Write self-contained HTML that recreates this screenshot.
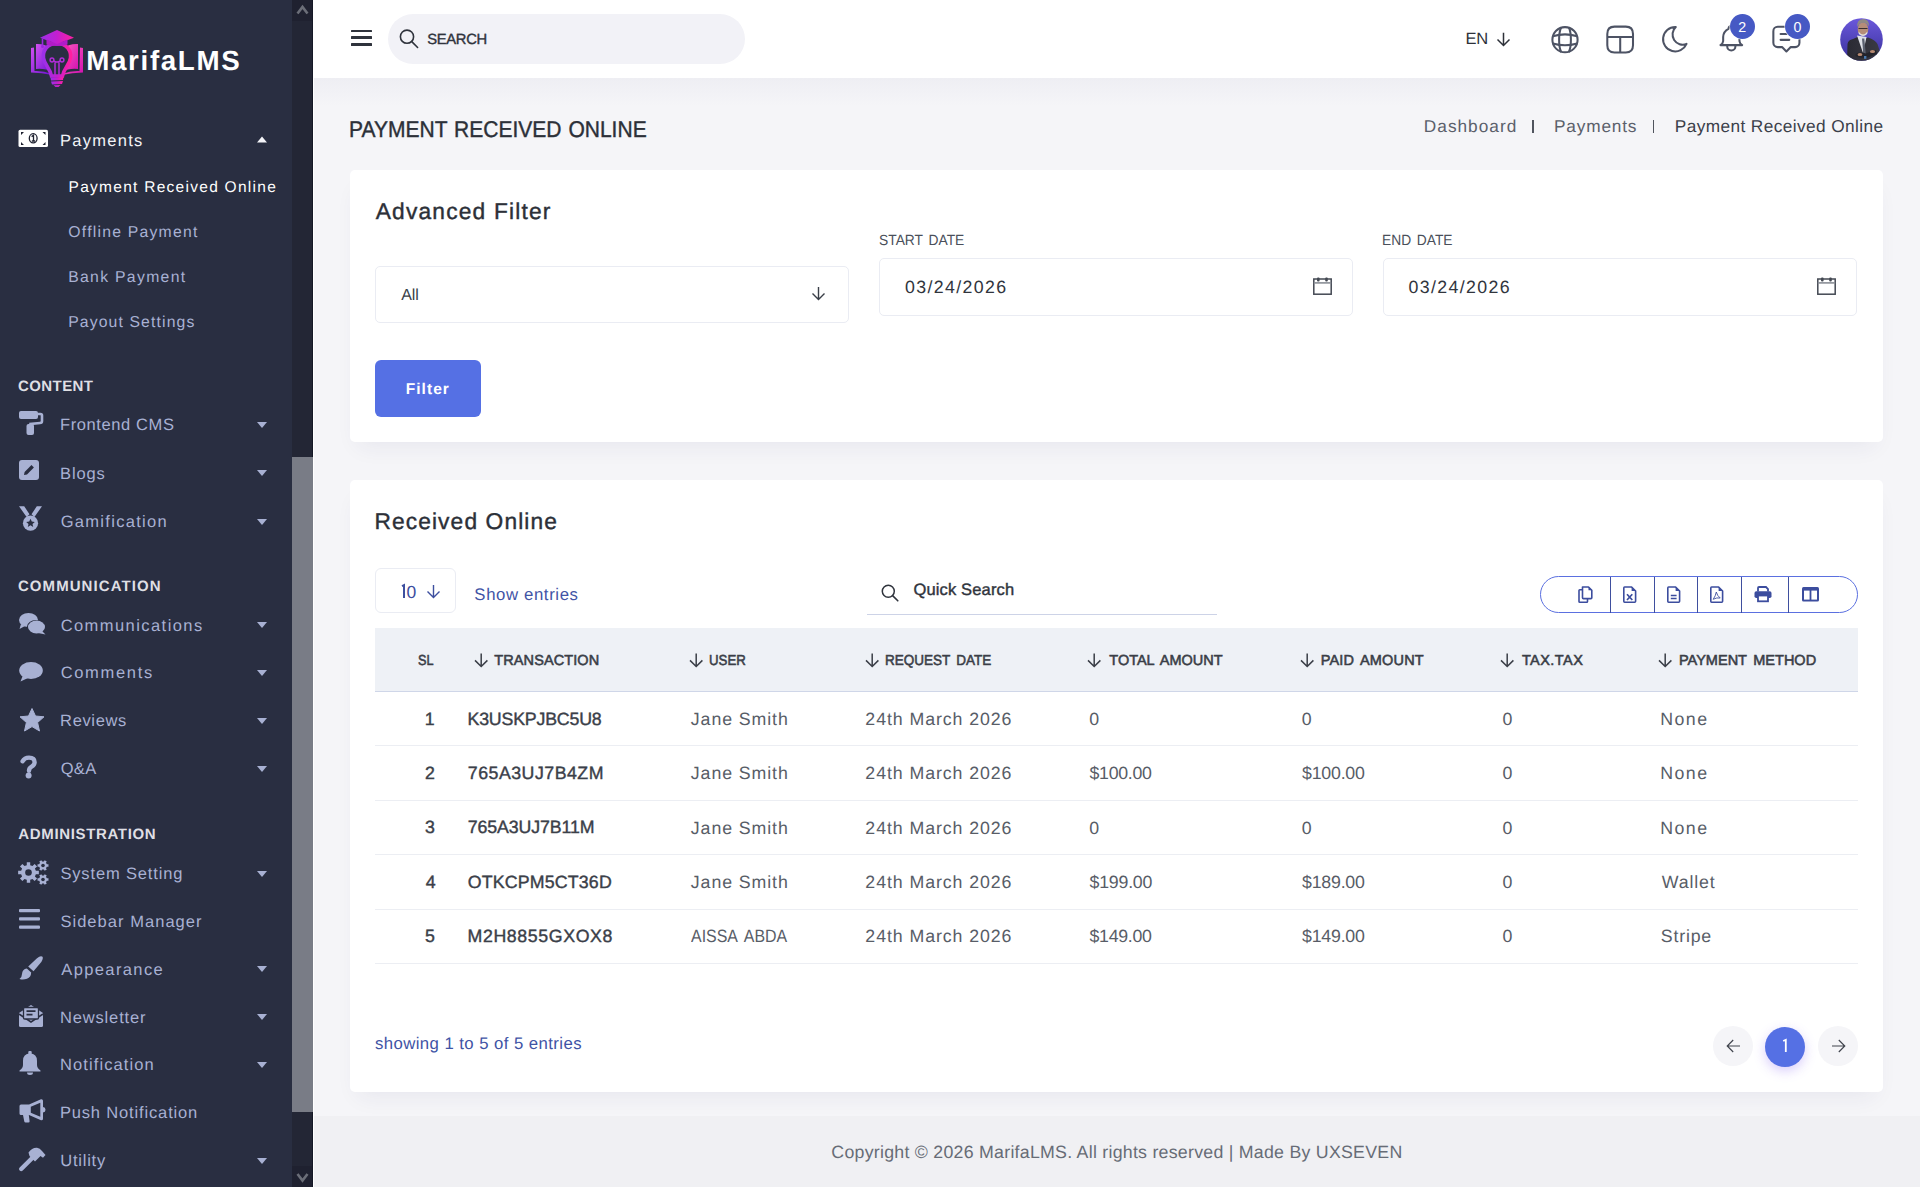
<!DOCTYPE html>
<html><head><meta charset="utf-8"><title>Payment Received Online</title>
<style>
html,body{margin:0;padding:0;width:1920px;height:1187px;overflow:hidden;background:#f5f5f8;font-family:"Liberation Sans",sans-serif}
.a{position:absolute}
.t{white-space:nowrap;text-rendering:geometricPrecision}
svg.a{overflow:visible}
</style></head><body>
<div class="a" style="left:313px;top:0px;width:1607px;height:1187px;background:#f5f5f8"></div>
<div class="a" style="left:313px;top:78px;width:1607px;height:28px;background:linear-gradient(#eeeef3,#f5f5f8)"></div>
<div class="a" style="left:1532.3px;top:119.5px;width:1.6000000000001364px;height:13.0px;background:#50545e"></div>
<div class="a" style="left:1652.8px;top:119.5px;width:1.6000000000001364px;height:13.0px;background:#50545e"></div>
<div class="a" style="left:313px;top:0px;width:1607px;height:78px;background:#fff"></div>
<div class="a" style="left:313px;top:1116px;width:1607px;height:71px;background:#f0f0f3"></div>
<div class="a" style="left:0px;top:0px;width:292px;height:1187px;background:#292e41"></div>
<div class="a" style="left:292px;top:0px;width:21px;height:1187px;background:#232635"></div>
<div class="a" style="left:312px;top:0px;width:1px;height:1187px;background:#151826"></div>
<div class="a" style="left:313px;top:0px;width:1px;height:1187px;background:#fff"></div>
<div class="a" style="left:292px;top:0px;width:20px;height:21px;background:#1f2130"></div>
<div class="a" style="left:292px;top:1166px;width:20px;height:21px;background:#1f2130"></div>
<div class="a" style="left:292px;top:457px;width:21px;height:655px;background:#797c86"></div>
<svg class="a" style="left:296px;top:4px;" width="13" height="11" viewBox="0 0 13 11"><path d="M1.5 9.5 L6.5 3 L11.5 9.5" fill="none" stroke="#6b6e78" stroke-width="2.6"/></svg>
<svg class="a" style="left:296px;top:1172px;" width="13" height="11" viewBox="0 0 13 11"><path d="M1.5 2 L6.5 8.5 L11.5 2" fill="none" stroke="#6b6e78" stroke-width="2.6"/></svg>
<div class="a" style="left:350px;top:170px;width:1533px;height:272px;background:#fff;border-radius:5px;box-shadow:0 12px 22px -8px rgba(40,40,100,0.07)"></div>
<div class="a" style="left:350px;top:480px;width:1533px;height:612px;background:#fff;border-radius:5px;box-shadow:0 12px 22px -8px rgba(40,40,100,0.07)"></div>
<div class="a" style="left:388px;top:13.5px;width:357px;height:50.25px;background:#f2f2f7;border-radius:25px"></div>
<div class="a" style="left:375px;top:266px;width:474px;height:57px;border:1px solid #eaecf3;border-radius:5px;box-sizing:border-box;background:#fff"></div>
<div class="a" style="left:879px;top:258px;width:474px;height:58px;border:1px solid #eaecf3;border-radius:5px;box-sizing:border-box;background:#fff"></div>
<div class="a" style="left:1383px;top:258px;width:474px;height:58px;border:1px solid #eaecf3;border-radius:5px;box-sizing:border-box;background:#fff"></div>
<div class="a" style="left:375px;top:360px;width:106px;height:57px;background:#5570e4;border-radius:6px"></div>
<div class="a" style="left:375px;top:568.4px;width:80.5px;height:44.39999999999998px;border:1px solid #eaecf3;border-radius:6px;box-sizing:border-box"></div>
<div class="a" style="left:867px;top:613.5px;width:350px;height:1.2000000000000455px;background:#cdd3e7"></div>
<div class="a" style="left:1540px;top:576px;width:318px;height:37px;border:1px solid #5b70e0;border-radius:19px;box-sizing:border-box"></div>
<div class="a" style="left:1610px;top:576.5px;width:1.2999999999999545px;height:36.0px;background:#3f4f9e"></div>
<div class="a" style="left:1654px;top:576.5px;width:1.2999999999999545px;height:36.0px;background:#3f4f9e"></div>
<div class="a" style="left:1697px;top:576.5px;width:1.2999999999999545px;height:36.0px;background:#3f4f9e"></div>
<div class="a" style="left:1741px;top:576.5px;width:1.2999999999999545px;height:36.0px;background:#3f4f9e"></div>
<div class="a" style="left:1788px;top:576.5px;width:1.2999999999999545px;height:36.0px;background:#3f4f9e"></div>
<div class="a" style="left:375px;top:628px;width:1483px;height:63px;background:#eef1f6"></div>
<div class="a" style="left:375px;top:690.5px;width:1483px;height:1.2000000000000455px;background:#cfd6e8"></div>
<div class="a" style="left:375px;top:745px;width:1483px;height:1px;background:#eceef3"></div>
<div class="a" style="left:375px;top:799.5px;width:1483px;height:1.0px;background:#eceef3"></div>
<div class="a" style="left:375px;top:854px;width:1483px;height:1px;background:#eceef3"></div>
<div class="a" style="left:375px;top:908.5px;width:1483px;height:1.0px;background:#eceef3"></div>
<div class="a" style="left:375px;top:962.5px;width:1483px;height:1.0px;background:#eceef3"></div>
<div class="a" style="left:1713px;top:1026px;width:40px;height:40px;background:#f5f5f8;border-radius:50%"></div>
<div class="a" style="left:1818px;top:1026px;width:40px;height:40px;background:#f5f5f8;border-radius:50%"></div>
<div class="a" style="left:1765px;top:1027px;width:40px;height:40px;background:#5570e4;border-radius:50%;box-shadow:0 4px 12px rgba(120,80,240,0.28)"></div>
<svg class="a" style="left:25px;top:25px" width="65" height="65" viewBox="0 0 65 65">
<defs><linearGradient id="lg1" x1="0" y1="0" x2="1" y2="0"><stop offset="0" stop-color="#9b30e8"/><stop offset="0.5" stop-color="#c21fd0"/><stop offset="1" stop-color="#ff1fa0"/></linearGradient>
<linearGradient id="lg2" x1="0" y1="0" x2="1" y2="1"><stop offset="0" stop-color="#d050f0"/><stop offset="1" stop-color="#6a10d0"/></linearGradient>
<linearGradient id="lg3" x1="0" y1="0" x2="1" y2="1"><stop offset="0" stop-color="#ff60c0"/><stop offset="1" stop-color="#d010b0"/></linearGradient></defs>
<path d="M6 23 L9 22.5 L9.5 46 Q18 45.5 27 49 L27 50 Q17 47.5 6 47.5 Z" fill="url(#lg2)"/>
<path d="M58 23 L55 22.5 L54.5 46 Q46 45.5 37 49 L37 50 Q47 47.5 58 47.5 Z" fill="url(#lg3)"/>
<path d="M11 19 Q20 18.5 27 24 L27 47 Q20 43 11 44 Z" fill="url(#lg2)"/>
<path d="M53 19 Q44 18.5 37 24 L37 47 Q44 43 53 44 Z" fill="url(#lg3)"/>
<path d="M32 18.5 C22 18.5 17.5 26 18.5 33 C19.5 40 25 43 26.5 51 L37.5 51 C39 43 44.5 40 45.5 33 C46.5 26 42 18.5 32 18.5 Z" fill="#292e41" stroke="url(#lg1)" stroke-width="3.6"/>
<g fill="none" stroke="#b02cd8" stroke-width="1.5"><circle cx="27" cy="35" r="1.9"/><circle cx="37" cy="35" r="1.9"/><path d="M28.8 36 Q32 38 35.2 36 M30 37.5 L30 50 M34 37.5 L34 50"/></g>
<path d="M25.5 52.5 L38.5 52 L38 55 L26 55.5 Z M26 56.5 L38 56 L37 59 L27 59.5 Z M28.5 60.2 L35.5 60 L33.5 62 L30.5 62 Z" fill="url(#lg1)"/>
<path d="M32 5 L49 12.8 L32 19 L15 12.8 Z" fill="url(#lg1)"/>
<path d="M21.5 14.5 L21.5 19.5 Q26 21 32 21 Q38 21 42.5 19.5 L42.5 14.5 L32 19 Z" fill="#b01cc8"/>
<path d="M17.5 13.5 L17.5 21" stroke="#9a28e0" stroke-width="1.6"/><circle cx="17.5" cy="21.5" r="1.5" fill="#9a28e0"/>
</svg>
<svg class="a" style="left:18px;top:129px" width="31" height="19" viewBox="0 0 31 19">
<rect x="0.5" y="0.8" width="29.5" height="17.2" rx="1.6" fill="#ffffff"/>
<ellipse cx="15.2" cy="9.3" rx="3.9" ry="4.6" fill="none" stroke="#1e2130" stroke-width="1.3"/>
<path d="M13.6 7.6 L15.5 6.3 L15.5 12 M13.8 12 L17.2 12" fill="none" stroke="#1e2130" stroke-width="1.3"/>
<path d="M3 3 L6 3 L3 6 Z M27.5 3 L24.5 3 L27.5 6 Z M3 16 L6 16 L3 13 Z M27.5 16 L24.5 16 L27.5 13 Z" fill="#1e2130"/>
</svg>
<svg class="a" style="left:256.5px;top:136px;" width="10" height="6.5" viewBox="0 0 10 6.5"><path d="M0 6.5 L5 0.5 L10 6.5 Z" fill="#f3f4f8"/></svg>
<svg class="a" style="left:256.5px;top:422.1px;" width="10" height="6" viewBox="0 0 10 6"><path d="M0 0 L10 0 L5 6 Z" fill="#a8b1d3"/></svg>
<svg class="a" style="left:256.5px;top:470.40000000000003px;" width="10" height="6" viewBox="0 0 10 6"><path d="M0 0 L10 0 L5 6 Z" fill="#a8b1d3"/></svg>
<svg class="a" style="left:256.5px;top:518.5px;" width="10" height="6" viewBox="0 0 10 6"><path d="M0 0 L10 0 L5 6 Z" fill="#a8b1d3"/></svg>
<svg class="a" style="left:256.5px;top:622.1999999999999px;" width="10" height="6" viewBox="0 0 10 6"><path d="M0 0 L10 0 L5 6 Z" fill="#a8b1d3"/></svg>
<svg class="a" style="left:256.5px;top:670.0px;" width="10" height="6" viewBox="0 0 10 6"><path d="M0 0 L10 0 L5 6 Z" fill="#a8b1d3"/></svg>
<svg class="a" style="left:256.5px;top:718.0999999999999px;" width="10" height="6" viewBox="0 0 10 6"><path d="M0 0 L10 0 L5 6 Z" fill="#a8b1d3"/></svg>
<svg class="a" style="left:256.5px;top:765.9px;" width="10" height="6" viewBox="0 0 10 6"><path d="M0 0 L10 0 L5 6 Z" fill="#a8b1d3"/></svg>
<svg class="a" style="left:256.5px;top:870.6999999999999px;" width="10" height="6" viewBox="0 0 10 6"><path d="M0 0 L10 0 L5 6 Z" fill="#a8b1d3"/></svg>
<svg class="a" style="left:256.5px;top:966.1999999999999px;" width="10" height="6" viewBox="0 0 10 6"><path d="M0 0 L10 0 L5 6 Z" fill="#a8b1d3"/></svg>
<svg class="a" style="left:256.5px;top:1014.1999999999999px;" width="10" height="6" viewBox="0 0 10 6"><path d="M0 0 L10 0 L5 6 Z" fill="#a8b1d3"/></svg>
<svg class="a" style="left:256.5px;top:1061.8px;" width="10" height="6" viewBox="0 0 10 6"><path d="M0 0 L10 0 L5 6 Z" fill="#a8b1d3"/></svg>
<svg class="a" style="left:256.5px;top:1157.6px;" width="10" height="6" viewBox="0 0 10 6"><path d="M0 0 L10 0 L5 6 Z" fill="#a8b1d3"/></svg>
<svg class="a" style="left:18.5px;top:410.5px;" width="24" height="24" viewBox="0 0 24 24"><rect x="0" y="0" width="19" height="8" rx="2" fill="#a8b1d3"/><path d="M19 3 L21.5 3 Q23 3 23 4.5 L23 10 Q23 12 21 12 L11.5 13 L11.5 15" fill="none" stroke="#a8b1d3" stroke-width="2.6"/><rect x="7.5" y="13" width="7.5" height="11" rx="2" fill="#a8b1d3"/></svg>
<svg class="a" style="left:18.5px;top:460px;" width="20" height="20" viewBox="0 0 20 20"><rect x="0" y="0" width="20" height="20" rx="3" fill="#a8b1d3"/><path d="M5 15 L5.6 12 L12.5 5.1 L14.9 7.5 L8 14.4 Z" fill="#292e41"/></svg>
<svg class="a" style="left:18.5px;top:505.5px;" width="23" height="25" viewBox="0 0 23 25"><path d="M0 0.3 L5.2 0.3 L10.5 8.2 L7.6 11 Z M23 0.3 L17.8 0.3 L12.5 8.2 L15.4 11 Z" fill="#a8b1d3"/><circle cx="11.5" cy="17.2" r="7.6" fill="#a8b1d3"/><path d="M11.5 12.8 L12.8 15.6 L15.8 15.9 L13.5 17.9 L14.2 20.9 L11.5 19.3 L8.8 20.9 L9.5 17.9 L7.2 15.9 L10.2 15.6 Z" fill="#292e41"/></svg>
<svg class="a" style="left:18.5px;top:612.5px;" width="27" height="22" viewBox="0 0 27 22"><ellipse cx="9.5" cy="7" rx="9.5" ry="7" fill="#a8b1d3"/><path d="M2 11 L0.5 16 L6 13 Z" fill="#a8b1d3"/><ellipse cx="17" cy="13.5" rx="9" ry="6.5" fill="#292e41"/><ellipse cx="17.5" cy="14" rx="8.5" ry="6.5" fill="#a8b1d3"/><path d="M23 18 L26.5 21.5 L19 20 Z" fill="#a8b1d3"/></svg>
<svg class="a" style="left:18.5px;top:661.5px;" width="24" height="20" viewBox="0 0 24 20"><ellipse cx="12" cy="8.5" rx="11.8" ry="8.5" fill="#a8b1d3"/><path d="M4 13 L1.5 19.5 L9 16 Z" fill="#a8b1d3"/></svg>
<svg class="a" style="left:18.5px;top:707.5px;" width="26" height="24" viewBox="0 0 26 24"><path d="M13 0.5 L16.5 8 L25 8.8 L18.6 14.5 L20.5 23 L13 18.6 L5.5 23 L7.4 14.5 L1 8.8 L9.5 8 Z" fill="#a8b1d3" stroke="#a8b1d3" stroke-width="1" stroke-linejoin="round"/></svg>
<svg class="a" style="left:19.5px;top:756px;" width="18" height="23" viewBox="0 0 18 23"><path d="M2.6 5.2 Q4.5 1.6 9 1.6 Q14.6 1.6 14.6 6.2 Q14.6 8.8 11.6 10.6 Q9 12 9 14.8" fill="none" stroke="#a8b1d3" stroke-width="4.4" stroke-linecap="round"/><circle cx="8.6" cy="19.6" r="3" fill="#a8b1d3"/></svg>
<svg class="a" style="left:18.5px;top:860px;" width="30" height="24" viewBox="0 0 30 24"><polygon points="19.86,10.78 19.86,14.22 16.86,14.21 15.91,16.50 18.04,18.60 15.60,21.04 13.50,18.91 11.21,19.86 11.22,22.86 7.78,22.86 7.79,19.86 5.50,18.91 3.40,21.04 0.96,18.60 3.09,16.50 2.14,14.21 -0.86,14.22 -0.86,10.78 2.14,10.79 3.09,8.50 0.96,6.40 3.40,3.96 5.50,6.09 7.79,5.14 7.78,2.14 11.22,2.14 11.21,5.14 13.50,6.09 15.60,3.96 18.04,6.40 15.91,8.50 16.86,10.79" fill="#a8b1d3"/><circle cx="9.5" cy="12.5" r="3.3" fill="#292e41"/><polygon points="29.47,4.28 29.47,6.72 27.85,6.71 26.97,8.23 27.79,9.62 25.67,10.84 24.88,9.43 23.12,9.43 22.33,10.84 20.21,9.62 21.03,8.23 20.15,6.71 18.53,6.72 18.53,4.28 20.15,4.29 21.03,2.77 20.21,1.38 22.33,0.16 23.12,1.57 24.88,1.57 25.67,0.16 27.79,1.38 26.97,2.77 27.85,4.29" fill="#a8b1d3"/><circle cx="24" cy="5.5" r="1.8" fill="#292e41"/><polygon points="29.47,18.28 29.47,20.72 27.85,20.71 26.97,22.23 27.79,23.62 25.67,24.84 24.88,23.43 23.12,23.43 22.33,24.84 20.21,23.62 21.03,22.23 20.15,20.71 18.53,20.72 18.53,18.28 20.15,18.29 21.03,16.77 20.21,15.38 22.33,14.16 23.12,15.57 24.88,15.57 25.67,14.16 27.79,15.38 26.97,16.77 27.85,18.29" fill="#a8b1d3"/><circle cx="24" cy="19.5" r="1.8" fill="#292e41"/></svg>
<svg class="a" style="left:18.5px;top:909px;" width="21" height="20" viewBox="0 0 21 20"><rect x="0" y="0" width="21" height="3.2" rx="1" fill="#a8b1d3"/><rect x="0" y="8.3" width="21" height="3.2" rx="1" fill="#a8b1d3"/><rect x="0" y="16.6" width="21" height="3.2" rx="1" fill="#a8b1d3"/></svg>
<svg class="a" style="left:18.5px;top:955.5px;" width="24" height="24" viewBox="0 0 24 24"><path d="M23.2 0.6 Q24.8 2 22.3 6 L14.5 15.2 L9.2 10.6 L18 2.3 Q21.5 -0.8 23.2 0.6 Z" fill="#a8b1d3"/><path d="M7.8 12.6 L12.2 16.6 Q12 21.3 8 22.8 Q4 24.2 0.5 23 Q3 21 3 18 Q3.4 13.2 7.8 12.6 Z" fill="#a8b1d3"/></svg>
<svg class="a" style="left:18.5px;top:1003.5px;" width="24" height="23" viewBox="0 0 24 23"><path d="M0 9 L12 1 L24 9 L24 21.5 Q24 23 22.5 23 L1.5 23 Q0 23 0 21.5 Z" fill="#a8b1d3"/><path d="M0 10 L12 18 L24 10" fill="none" stroke="#292e41" stroke-width="1.6"/><rect x="4.5" y="3.5" width="15" height="11.5" rx="1.2" fill="#a8b1d3" stroke="#292e41" stroke-width="1.3"/><path d="M7.5 7.2 L16.5 7.2 M7.5 10.6 L13.5 10.6" stroke="#292e41" stroke-width="1.7"/></svg>
<svg class="a" style="left:18.5px;top:1050.5px;" width="22" height="24" viewBox="0 0 22 24"><rect x="9.3" y="0" width="3.4" height="4" rx="1" fill="#a8b1d3"/><path d="M11 2.5 Q18 2.5 18 10 L18 14 Q18 17 21.5 19.5 L21.5 20.5 L0.5 20.5 L0.5 19.5 Q4 17 4 14 L4 10 Q4 2.5 11 2.5 Z" fill="#a8b1d3"/><path d="M8 21.5 Q8 24 11 24 Q14 24 14 21.5 Z" fill="#a8b1d3"/></svg>
<svg class="a" style="left:18.5px;top:1099px;" width="27" height="24" viewBox="0 0 27 24"><path d="M0.5 7 Q0.5 5.5 2 5.5 L10 5.5 L22 0.3 Q24 0 24 1.8 L24 19.7 Q24 21.5 22 21.2 L10 16 L2 16 Q0.5 16 0.5 14.5 Z" fill="#a8b1d3"/><path d="M24 8 Q26.5 8.3 26.5 10.75 Q26.5 13.2 24 13.5 Z" fill="#a8b1d3"/><path d="M4 16 L9.8 16 L10.6 22.3 Q10.7 23.6 9.4 23.6 L6.6 23.6 Q5.5 23.6 5.3 22.5 Z" fill="#a8b1d3"/><path d="M21.3 3.8 L21.3 17.8 L11.8 13.8 L11.8 7.8 Z" fill="#292e41"/></svg>
<svg class="a" style="left:18.5px;top:1147px;" width="27" height="24" viewBox="0 0 27 24"><path d="M2.2 22 L14 10.2" stroke="#a8b1d3" stroke-width="4.4" stroke-linecap="round"/><path d="M9.5 5.5 Q13 0.5 18 0.8 Q21 1 23 4 L26.5 8 L24 10.8 L21.5 9 L16 14.5 L10.5 9 Z" fill="#a8b1d3"/></svg>
<div class="a" style="left:351px;top:29.5px;width:21px;height:2.700000000000003px;background:#2f333c;border-radius:0.5px"></div>
<div class="a" style="left:351px;top:36.2px;width:21px;height:2.700000000000003px;background:#2f333c;border-radius:0.5px"></div>
<div class="a" style="left:351px;top:43.1px;width:21px;height:2.700000000000003px;background:#2f333c;border-radius:0.5px"></div>
<svg class="a" style="left:399px;top:29px;" width="20" height="20" viewBox="0 0 20 20"><circle cx="8" cy="7.7" r="6.6" fill="none" stroke="#30343d" stroke-width="1.6"/><path d="M12.8 12.6 L18.6 18.5" stroke="#30343d" stroke-width="1.6" stroke-linecap="round"/></svg>
<svg class="a" style="left:1496px;top:32px;" width="15" height="15" viewBox="0 0 15 15"><path d="M7.5 0.8 L7.5 13.5 M1.5 7.5 L7.5 13.5 L13.5 7.5" fill="none" stroke="#2d3139" stroke-width="1.5"/></svg>
<svg class="a" style="left:1550px;top:24.5px;" width="30" height="30" viewBox="0 0 30 30"><g fill="none" stroke="#4d5364" stroke-width="2.05"><circle cx="15" cy="14.7" r="12.6"/><path d="M11.2 2.2 C8.4 8 8.4 21.4 11.2 27.2 M18.8 2.2 C21.6 8 21.6 21.4 18.8 27.2"/><path d="M2.8 11.2 Q15 7.6 27.2 11.2 M2.8 18.4 Q15 22 27.2 18.4"/></g></svg>
<svg class="a" style="left:1605px;top:24.5px;" width="30" height="30" viewBox="0 0 30 30"><g fill="none" stroke="#4d5364" stroke-width="2.05"><path d="M2.3 9 Q2.3 1.6 9.5 1.6 L20.8 1.6 Q28 1.6 28 9 L28 20.2 Q28 27.4 20.8 27.4 L9.5 27.4 Q2.3 27.4 2.3 20.2 Z"/><path d="M2.3 12 L28 12 M15.2 12 L15.2 27.4"/></g></svg>
<svg class="a" style="left:1658.5px;top:22.5px" width="32.52" height="32.52" viewBox="0 0 24 24"><g fill="none" stroke="#4d5364" stroke-width="1.5" stroke-linecap="round" stroke-linejoin="round"><path d="M12 3c.132 0 .263 0 .393 0a7.5 7.5 0 0 0 7.92 12.446a9 9 0 1 1 -8.313 -12.454z"/></g></svg>
<svg class="a" style="left:1714.6px;top:22.45px" width="32.64" height="32.64" viewBox="0 0 24 24"><g fill="none" stroke="#4d5364" stroke-width="1.5" stroke-linecap="round" stroke-linejoin="round"><path d="M10 5a2 2 0 1 1 4 0a7 7 0 0 1 4 6v3a4 4 0 0 0 2 3h-16a4 4 0 0 0 2 -3v-3a7 7 0 0 1 4 -6"/><path d="M9 17v1a3 3 0 0 0 6 0v-1"/></g></svg>
<svg class="a" style="left:1768.6px;top:20.6px" width="34.80" height="34.80" viewBox="0 0 24 24"><g fill="none" stroke="#4d5364" stroke-width="1.42" stroke-linecap="round" stroke-linejoin="round"><path d="M8 9h8"/><path d="M8 13h6"/><path d="M9 18h-3a3 3 0 0 1 -3 -3v-8a3 3 0 0 1 3 -3h12a3 3 0 0 1 3 3v8a3 3 0 0 1 -3 3h-3l-3 3l-3 -3z"/></g></svg>
<svg class="a" style="left:1840px;top:17.5px" width="43" height="43" viewBox="0 0 43 43">
<defs><linearGradient id="av" x1="0" y1="0" x2="0" y2="1"><stop offset="0" stop-color="#6b58dc"/><stop offset="1" stop-color="#38309a"/></linearGradient>
<linearGradient id="suit" x1="0" y1="0" x2="1" y2="0"><stop offset="0" stop-color="#2a2a33"/><stop offset="1" stop-color="#3a3a44"/></linearGradient>
<clipPath id="avc"><circle cx="21.5" cy="21.5" r="21.3"/></clipPath></defs>
<g clip-path="url(#avc)"><rect width="43" height="43" fill="url(#av)"/>
<path d="M7 43 L7.5 26 Q8 22 13 21 L18.5 18.5 L23 21 L28 19.5 Q35 21.5 37.5 26 L40 34 L38 43 Z" fill="url(#suit)"/>
<path d="M17 17.5 L23 35 L26.5 19 Z" fill="#dfe1e8"/>
<path d="M22 20.5 L24.3 20.5 L25.8 36 L23.5 38 Z" fill="#5a5f6e"/>
<path d="M15.5 36 Q20 33.5 26 35.5 Q30 33 36 32 L37 36 Q30 39 25 40 Q19 40 15.5 38 Z" fill="#24242c"/>
<ellipse cx="32.5" cy="33.5" rx="2.6" ry="1.6" fill="#b88a72"/><ellipse cx="20" cy="36.5" rx="2.4" ry="1.5" fill="#b88a72"/>
<rect x="24" y="38" width="2.4" height="2.8" fill="#4a7ab0"/>
<ellipse cx="23" cy="11" rx="5.3" ry="6.8" fill="#b58d78"/>
<path d="M17.3 9 Q16.5 1.5 23 1 Q29.5 1 29 8.5 Q27 4.5 23 4.7 Q19 4.5 17.3 9 Z" fill="#8f8a85"/>
<path d="M18.5 13.5 Q23 19.5 27.5 13.5 L27.2 16 Q23 20 18.8 16 Z" fill="#e0e0e0"/>
<path d="M18.5 10.5 L27.5 10.5" stroke="#3a3030" stroke-width="1"/>
</g></svg>
<svg class="a" style="left:811px;top:286px;" width="15" height="15" viewBox="0 0 15 15"><path d="M7.5 1 L7.5 13.5 M1.5 7.5 L7.5 13.5 L13.5 7.5" fill="none" stroke="#3a3f48" stroke-width="1.4"/></svg>
<svg class="a" style="left:1313px;top:276.5px;" width="19" height="18" viewBox="0 0 19 18"><g fill="none" stroke="#434852" stroke-width="1.5"><rect x="0.8" y="2" width="17.4" height="15.2"/><path d="M0.8 5.9 L18.2 5.9" stroke-width="1.6" stroke="#8a8e96"/></g><rect x="4" y="0.5" width="2.6" height="4" rx="1" fill="#434852"/><rect x="12.2" y="0.5" width="2.6" height="4" rx="1" fill="#434852"/></svg>
<svg class="a" style="left:1817px;top:276.5px;" width="19" height="18" viewBox="0 0 19 18"><g fill="none" stroke="#434852" stroke-width="1.5"><rect x="0.8" y="2" width="17.4" height="15.2"/><path d="M0.8 5.9 L18.2 5.9" stroke-width="1.6" stroke="#8a8e96"/></g><rect x="4" y="0.5" width="2.6" height="4" rx="1" fill="#434852"/><rect x="12.2" y="0.5" width="2.6" height="4" rx="1" fill="#434852"/></svg>
<svg class="a" style="left:399.5px;top:584px;" width="8" height="16" viewBox="0 0 8 16"><path d="M2 2.2 L4 1.2 L4 14" fill="none" stroke="#3d4f9f" stroke-width="2" stroke-linejoin="miter"/></svg>
<svg class="a" style="left:425.5px;top:583.5px;" width="15" height="15" viewBox="0 0 15 15"><path d="M7.5 1 L7.5 13.5 M1.5 7.5 L7.5 13.5 L13.5 7.5" fill="none" stroke="#3d4f9f" stroke-width="1.4"/></svg>
<svg class="a" style="left:881px;top:584px;" width="18" height="18" viewBox="0 0 18 18"><circle cx="7.3" cy="7.3" r="6" fill="none" stroke="#30343d" stroke-width="1.5"/><path d="M11.6 11.6 L16.8 16.8" stroke="#30343d" stroke-width="1.6" stroke-linecap="round"/></svg>
<svg class="a" style="left:1578px;top:585.5px;" width="15" height="17" viewBox="0 0 15 17"><g fill="none" stroke="#3c4d9e" stroke-width="1.6" stroke-linejoin="round"><path d="M4.5 1 L10.5 1 L13.8 4.3 L13.8 11.7 Q13.8 12.6 12.9 12.6 L5.4 12.6 Q4.5 12.6 4.5 11.7 Z"/><path d="M4.5 3.7 L1.8 3.7 Q1 3.7 1 4.6 L1 15.4 Q1 16.2 1.8 16.2 L8.7 16.2 Q9.5 16.2 9.5 15.4 L9.5 12.6"/></g><path d="M10.5 1 L10.5 4.3 L13.8 4.3 Z" fill="#3c4d9e"/></svg>
<svg class="a" style="left:1622.5px;top:585.5px;" width="14" height="17" viewBox="0 0 14 17"><path d="M1.6 1 L8.6 1 L12.6 5 L12.6 15.3 Q12.6 16.2 11.7 16.2 L1.6 16.2 Q0.8 16.2 0.8 15.3 L0.8 1.9 Q0.8 1 1.6 1 Z" fill="none" stroke="#3c4d9e" stroke-width="1.6" stroke-linejoin="round"/><path d="M8.6 1 L8.6 5 L12.6 5 Z" fill="#3c4d9e"/><path d="M4 8.2 L9.3 14 M9.3 8.2 L4 14" stroke="#3c4d9e" stroke-width="1.7"/></svg>
<svg class="a" style="left:1666.5px;top:585.5px;" width="14" height="17" viewBox="0 0 14 17"><path d="M1.6 1 L8.6 1 L12.6 5 L12.6 15.3 Q12.6 16.2 11.7 16.2 L1.6 16.2 Q0.8 16.2 0.8 15.3 L0.8 1.9 Q0.8 1 1.6 1 Z" fill="none" stroke="#3c4d9e" stroke-width="1.6" stroke-linejoin="round"/><path d="M8.6 1 L8.6 5 L12.6 5 Z" fill="#3c4d9e"/><path d="M3.8 9.5 L9.6 9.5 M3.8 12.5 L9.6 12.5" stroke="#3c4d9e" stroke-width="1.6"/></svg>
<svg class="a" style="left:1710px;top:585.5px;" width="14" height="17" viewBox="0 0 14 17"><path d="M1.6 1 L8.6 1 L12.6 5 L12.6 15.3 Q12.6 16.2 11.7 16.2 L1.6 16.2 Q0.8 16.2 0.8 15.3 L0.8 1.9 Q0.8 1 1.6 1 Z" fill="none" stroke="#3c4d9e" stroke-width="1.6" stroke-linejoin="round"/><path d="M8.6 1 L8.6 5 L12.6 5 Z" fill="#3c4d9e"/><path d="M6.3 6 Q5.6 10 3.2 13.3 Q6.8 11.3 10.2 12 Q7.2 9.8 6.3 6 Z" fill="none" stroke="#3c4d9e" stroke-width="0.9"/></svg>
<svg class="a" style="left:1753.5px;top:586px;" width="18" height="16" viewBox="0 0 18 16"><path d="M4 5.5 L4 2 Q4 1 5 1 L12 1 L14 3 L14 5.5" fill="none" stroke="#3c4d9e" stroke-width="1.8"/><rect x="0.5" y="5.3" width="17" height="6.8" rx="1.8" fill="#3c4d9e"/><rect x="4" y="9.5" width="10" height="5.8" fill="#fff" stroke="#3c4d9e" stroke-width="1.8"/></svg>
<svg class="a" style="left:1801.5px;top:586.5px;" width="17" height="15" viewBox="0 0 17 15"><rect x="0" y="0" width="17" height="14.5" rx="1.5" fill="#3c4d9e"/><rect x="2" y="3.6" width="5.6" height="9" fill="#fff"/><rect x="9.4" y="3.6" width="5.6" height="9" fill="#fff"/></svg>
<svg class="a" style="left:473.7px;top:652.5px;" width="15" height="15" viewBox="0 0 15 15"><path d="M7.2 0.5 L7.2 13.5 M1 7.4 L7.2 13.5 L13.4 7.4" fill="none" stroke="#3a3e47" stroke-width="1.5"/></svg>
<svg class="a" style="left:688.9px;top:652.5px;" width="15" height="15" viewBox="0 0 15 15"><path d="M7.2 0.5 L7.2 13.5 M1 7.4 L7.2 13.5 L13.4 7.4" fill="none" stroke="#3a3e47" stroke-width="1.5"/></svg>
<svg class="a" style="left:864.5px;top:652.5px;" width="15" height="15" viewBox="0 0 15 15"><path d="M7.2 0.5 L7.2 13.5 M1 7.4 L7.2 13.5 L13.4 7.4" fill="none" stroke="#3a3e47" stroke-width="1.5"/></svg>
<svg class="a" style="left:1087.2px;top:652.5px;" width="15" height="15" viewBox="0 0 15 15"><path d="M7.2 0.5 L7.2 13.5 M1 7.4 L7.2 13.5 L13.4 7.4" fill="none" stroke="#3a3e47" stroke-width="1.5"/></svg>
<svg class="a" style="left:1299.5px;top:652.5px;" width="15" height="15" viewBox="0 0 15 15"><path d="M7.2 0.5 L7.2 13.5 M1 7.4 L7.2 13.5 L13.4 7.4" fill="none" stroke="#3a3e47" stroke-width="1.5"/></svg>
<svg class="a" style="left:1500.2px;top:652.5px;" width="15" height="15" viewBox="0 0 15 15"><path d="M7.2 0.5 L7.2 13.5 M1 7.4 L7.2 13.5 L13.4 7.4" fill="none" stroke="#3a3e47" stroke-width="1.5"/></svg>
<svg class="a" style="left:1658.2px;top:652.5px;" width="15" height="15" viewBox="0 0 15 15"><path d="M7.2 0.5 L7.2 13.5 M1 7.4 L7.2 13.5 L13.4 7.4" fill="none" stroke="#3a3e47" stroke-width="1.5"/></svg>
<svg class="a" style="left:1726px;top:1038.5px;" width="15" height="14" viewBox="0 0 15 14"><path d="M14 7 L1.2 7 M7.2 1 L1.2 7 L7.2 13" fill="none" stroke="#40444d" stroke-width="1.15"/></svg>
<svg class="a" style="left:1830.5px;top:1038.5px;" width="15" height="14" viewBox="0 0 15 14"><path d="M1 7 L13.8 7 M7.8 1 L13.8 7 L7.8 13" fill="none" stroke="#40444d" stroke-width="1.15"/></svg>
<svg class="a" style="left:1782px;top:1039px;" width="6" height="14" viewBox="0 0 6 14"><path d="M1.2 2 L3.8 0.8 L3.8 13" fill="none" stroke="#fff" stroke-width="1.8"/></svg>
<div class="a" style="left:1730.2px;top:13.9px;width:24.799999999999955px;height:25.0px;background:#4659c4;border-radius:50%;box-shadow:0 0 0 0.5px #fff"></div>
<div class="a" style="left:1785.2px;top:13.9px;width:24.799999999999955px;height:25.0px;background:#4659c4;border-radius:50%;box-shadow:0 0 0 0.5px #fff"></div>
<div class="a t" style="left:86.29px;top:47px;font-size:27.75px;line-height:27.75px;color:#ffffff;letter-spacing:1.642px;font-weight:bold;">MarifaLMS</div>
<div class="a t" style="left:59.89px;top:133px;font-size:16.5px;line-height:16.5px;color:#f3f4f8;letter-spacing:1.297px;">Payments</div>
<div class="a t" style="left:68.54px;top:180px;font-size:15.5px;line-height:15.5px;color:#ffffff;letter-spacing:1.276px;">Payment Received Online</div>
<div class="a t" style="left:68.34px;top:225px;font-size:15.75px;line-height:15.75px;color:#a8b1d3;letter-spacing:1.228px;">Offline Payment</div>
<div class="a t" style="left:68.13px;top:270px;font-size:15.75px;line-height:15.75px;color:#a8b1d3;letter-spacing:1.328px;">Bank Payment</div>
<div class="a t" style="left:68.13px;top:315px;font-size:15.75px;line-height:15.75px;color:#a8b1d3;letter-spacing:1.135px;">Payout Settings</div>
<div class="a t" style="left:18.04px;top:379px;font-size:15.0px;line-height:15.0px;color:#dfdfe4;letter-spacing:0.416px;font-weight:bold;">CONTENT</div>
<div class="a t" style="left:59.99px;top:417px;font-size:16.5px;line-height:16.5px;color:#a8b1d3;letter-spacing:0.607px;">Frontend CMS</div>
<div class="a t" style="left:60.09px;top:466px;font-size:16.5px;line-height:16.5px;color:#a8b1d3;letter-spacing:0.845px;">Blogs</div>
<div class="a t" style="left:60.69px;top:514px;font-size:16.5px;line-height:16.5px;color:#a8b1d3;letter-spacing:1.298px;">Gamification</div>
<div class="a t" style="left:17.94px;top:579px;font-size:15.0px;line-height:15.0px;color:#dfdfe4;letter-spacing:1.068px;font-weight:bold;">COMMUNICATION</div>
<div class="a t" style="left:60.67px;top:618px;font-size:16.5px;line-height:16.5px;color:#a8b1d3;letter-spacing:1.437px;">Communications</div>
<div class="a t" style="left:60.67px;top:665px;font-size:16.5px;line-height:16.5px;color:#a8b1d3;letter-spacing:1.682px;">Comments</div>
<div class="a t" style="left:60.09px;top:713px;font-size:16.5px;line-height:16.5px;color:#a8b1d3;letter-spacing:0.647px;">Reviews</div>
<div class="a t" style="left:60.71px;top:761px;font-size:16.5px;line-height:16.5px;color:#a8b1d3;letter-spacing:0.292px;">Q&amp;A</div>
<div class="a t" style="left:18.3px;top:827px;font-size:15.0px;line-height:15.0px;color:#dfdfe4;letter-spacing:0.653px;font-weight:bold;">ADMINISTRATION</div>
<div class="a t" style="left:60.42px;top:866px;font-size:16.5px;line-height:16.5px;color:#a8b1d3;letter-spacing:0.854px;">System Setting</div>
<div class="a t" style="left:60.42px;top:914px;font-size:16.5px;line-height:16.5px;color:#a8b1d3;letter-spacing:1.039px;">Sidebar Manager</div>
<div class="a t" style="left:61.34px;top:962px;font-size:16.5px;line-height:16.5px;color:#a8b1d3;letter-spacing:1.374px;">Appearance</div>
<div class="a t" style="left:59.89px;top:1010px;font-size:16.5px;line-height:16.5px;color:#a8b1d3;letter-spacing:0.864px;">Newsletter</div>
<div class="a t" style="left:59.89px;top:1057px;font-size:16.5px;line-height:16.5px;color:#a8b1d3;letter-spacing:1.116px;">Notification</div>
<div class="a t" style="left:59.89px;top:1105px;font-size:16.5px;line-height:16.5px;color:#a8b1d3;letter-spacing:0.85px;">Push Notification</div>
<div class="a t" style="left:60.34px;top:1153px;font-size:16.5px;line-height:16.5px;color:#a8b1d3;letter-spacing:0.749px;">Utility</div>
<div class="a t" style="left:427.21px;top:33px;font-size:14.75px;line-height:14.75px;color:#30343d;-webkit-text-stroke:0.4px #30343d;letter-spacing:-0.289px;">SEARCH</div>
<div class="a t" style="left:1465.49px;top:31px;font-size:16.5px;line-height:16.5px;color:#2d3139;letter-spacing:-0.335px;">EN</div>
<div class="a t" style="left:1738.28px;top:21px;font-size:14.25px;line-height:14.25px;color:#ffffff;">2</div>
<div class="a t" style="left:1793.39px;top:21px;font-size:14.25px;line-height:14.25px;color:#ffffff;">0</div>
<div class="a t" style="left:349.3px;top:118px;font-size:22.75px;line-height:22.75px;color:#2c3038;-webkit-text-stroke:0.4px #2c3038;word-spacing:1.2px;transform:scaleX(0.9237);transform-origin:0 0;">PAYMENT RECEIVED ONLINE</div>
<div class="a t" style="left:1423.83px;top:118px;font-size:17.25px;line-height:17.25px;color:#5b606b;letter-spacing:1.006px;">Dashboard</div>
<div class="a t" style="left:1554.03px;top:118px;font-size:17.25px;line-height:17.25px;color:#5b606b;letter-spacing:0.817px;">Payments</div>
<div class="a t" style="left:1674.73px;top:118px;font-size:17.25px;line-height:17.25px;color:#3b404a;letter-spacing:0.404px;">Payment Received Online</div>
<div class="a t" style="left:375.72px;top:200px;font-size:22.75px;line-height:22.75px;color:#2c3038;-webkit-text-stroke:0.4px #2c3038;letter-spacing:1.188px;">Advanced Filter</div>
<div class="a t" style="left:401.24px;top:288px;font-size:16.0px;line-height:16.0px;color:#3a3f48;letter-spacing:-0.153px;">All</div>
<div class="a t" style="left:878.67px;top:234px;font-size:14.75px;line-height:14.75px;color:#4a4f5a;word-spacing:2px;transform:scaleX(0.937);transform-origin:0 0;">START DATE</div>
<div class="a t" style="left:1382.4px;top:234px;font-size:14.75px;line-height:14.75px;color:#4a4f5a;word-spacing:2px;transform:scaleX(0.9341);transform-origin:0 0;">END DATE</div>
<div class="a t" style="left:905.09px;top:279px;font-size:17.75px;line-height:17.75px;color:#31353d;letter-spacing:1.344px;">03/24/2026</div>
<div class="a t" style="left:1408.59px;top:279px;font-size:17.75px;line-height:17.75px;color:#31353d;letter-spacing:1.344px;">03/24/2026</div>
<div class="a t" style="left:405.69px;top:382px;font-size:15.5px;line-height:15.5px;color:#ffffff;letter-spacing:1.06px;font-weight:bold;">Filter</div>
<div class="a t" style="left:374.38px;top:510px;font-size:22.75px;line-height:22.75px;color:#2c3038;-webkit-text-stroke:0.4px #2c3038;letter-spacing:1.117px;">Received Online</div>
<div class="a t" style="left:406.49px;top:584px;font-size:17.5px;line-height:17.5px;color:#3d4f9f;">0</div>
<div class="a t" style="left:474.37px;top:587px;font-size:16.75px;line-height:16.75px;color:#4254a6;letter-spacing:0.618px;">Show entries</div>
<div class="a t" style="left:913.4px;top:582px;font-size:16.5px;line-height:16.5px;color:#30343d;-webkit-text-stroke:0.4px #30343d;letter-spacing:0.159px;">Quick Search</div>
<div class="a t" style="left:418.47px;top:654px;font-size:14.5px;line-height:14.5px;color:#3a3e47;-webkit-text-stroke:0.55px #3a3e47;transform:scaleX(0.8724);transform-origin:0 0;">SL</div>
<div class="a t" style="left:494.3px;top:654px;font-size:14.5px;line-height:14.5px;color:#3a3e47;-webkit-text-stroke:0.55px #3a3e47;letter-spacing:0.094px;">TRANSACTION</div>
<div class="a t" style="left:709.48px;top:654px;font-size:14.5px;line-height:14.5px;color:#3a3e47;-webkit-text-stroke:0.55px #3a3e47;transform:scaleX(0.9124);transform-origin:0 0;">USER</div>
<div class="a t" style="left:884.73px;top:654px;font-size:14.5px;line-height:14.5px;color:#3a3e47;-webkit-text-stroke:0.55px #3a3e47;word-spacing:2.5px;transform:scaleX(0.932);transform-origin:0 0;">REQUEST DATE</div>
<div class="a t" style="left:1109.3px;top:654px;font-size:14.5px;line-height:14.5px;color:#3a3e47;-webkit-text-stroke:0.55px #3a3e47;word-spacing:2.5px;letter-spacing:-0.006px;">TOTAL AMOUNT</div>
<div class="a t" style="left:1320.77px;top:654px;font-size:14.5px;line-height:14.5px;color:#3a3e47;-webkit-text-stroke:0.55px #3a3e47;word-spacing:2.5px;letter-spacing:0.156px;">PAID AMOUNT</div>
<div class="a t" style="left:1521.9px;top:654px;font-size:14.5px;line-height:14.5px;color:#3a3e47;-webkit-text-stroke:0.55px #3a3e47;letter-spacing:0.443px;">TAX.TAX</div>
<div class="a t" style="left:1678.97px;top:654px;font-size:14.5px;line-height:14.5px;color:#3a3e47;-webkit-text-stroke:0.55px #3a3e47;word-spacing:2.5px;letter-spacing:0.01px;">PAYMENT METHOD</div>
<div class="a t" style="left:424.77px;top:711px;font-size:17.75px;line-height:17.75px;color:#3b4049;-webkit-text-stroke:0.4px #3b4049;">1</div>
<div class="a t" style="left:467.54px;top:711px;font-size:17.75px;line-height:17.75px;color:#3b4049;-webkit-text-stroke:0.4px #3b4049;letter-spacing:-0.184px;">K3USKPJBC5U8</div>
<div class="a t" style="left:690.83px;top:711px;font-size:17.75px;line-height:17.75px;color:#585d67;letter-spacing:0.912px;">Jane Smith</div>
<div class="a t" style="left:865.37px;top:711px;font-size:17.75px;line-height:17.75px;color:#585d67;letter-spacing:0.923px;">24th March 2026</div>
<div class="a t" style="left:1089.29px;top:711px;font-size:17.75px;line-height:17.75px;color:#585d67;">0</div>
<div class="a t" style="left:1301.79px;top:711px;font-size:17.75px;line-height:17.75px;color:#585d67;">0</div>
<div class="a t" style="left:1502.59px;top:711px;font-size:17.75px;line-height:17.75px;color:#585d67;">0</div>
<div class="a t" style="left:1660.2px;top:711px;font-size:17.75px;line-height:17.75px;color:#585d67;letter-spacing:1.463px;">None</div>
<div class="a t" style="left:425.05px;top:765px;font-size:17.75px;line-height:17.75px;color:#3b4049;-webkit-text-stroke:0.4px #3b4049;">2</div>
<div class="a t" style="left:467.83px;top:765px;font-size:17.75px;line-height:17.75px;color:#3b4049;-webkit-text-stroke:0.4px #3b4049;letter-spacing:0.494px;">765A3UJ7B4ZM</div>
<div class="a t" style="left:690.83px;top:765px;font-size:17.75px;line-height:17.75px;color:#585d67;letter-spacing:0.912px;">Jane Smith</div>
<div class="a t" style="left:865.37px;top:765px;font-size:17.75px;line-height:17.75px;color:#585d67;letter-spacing:0.923px;">24th March 2026</div>
<div class="a t" style="left:1089.5px;top:765px;font-size:17.75px;line-height:17.75px;color:#585d67;letter-spacing:-0.288px;">$100.00</div>
<div class="a t" style="left:1302.0px;top:765px;font-size:17.75px;line-height:17.75px;color:#585d67;letter-spacing:-0.213px;">$100.00</div>
<div class="a t" style="left:1502.59px;top:765px;font-size:17.75px;line-height:17.75px;color:#585d67;">0</div>
<div class="a t" style="left:1660.2px;top:765px;font-size:17.75px;line-height:17.75px;color:#585d67;letter-spacing:1.463px;">None</div>
<div class="a t" style="left:425.12px;top:819px;font-size:17.75px;line-height:17.75px;color:#3b4049;-webkit-text-stroke:0.4px #3b4049;">3</div>
<div class="a t" style="left:467.83px;top:819px;font-size:17.75px;line-height:17.75px;color:#3b4049;-webkit-text-stroke:0.4px #3b4049;letter-spacing:-0.11px;">765A3UJ7B11M</div>
<div class="a t" style="left:690.83px;top:820px;font-size:17.75px;line-height:17.75px;color:#585d67;letter-spacing:0.912px;">Jane Smith</div>
<div class="a t" style="left:865.37px;top:820px;font-size:17.75px;line-height:17.75px;color:#585d67;letter-spacing:0.923px;">24th March 2026</div>
<div class="a t" style="left:1089.29px;top:820px;font-size:17.75px;line-height:17.75px;color:#585d67;">0</div>
<div class="a t" style="left:1301.79px;top:820px;font-size:17.75px;line-height:17.75px;color:#585d67;">0</div>
<div class="a t" style="left:1502.59px;top:820px;font-size:17.75px;line-height:17.75px;color:#585d67;">0</div>
<div class="a t" style="left:1660.2px;top:820px;font-size:17.75px;line-height:17.75px;color:#585d67;letter-spacing:1.463px;">None</div>
<div class="a t" style="left:425.75px;top:874px;font-size:17.75px;line-height:17.75px;color:#3b4049;-webkit-text-stroke:0.4px #3b4049;">4</div>
<div class="a t" style="left:467.84px;top:874px;font-size:17.75px;line-height:17.75px;color:#3b4049;-webkit-text-stroke:0.4px #3b4049;letter-spacing:0.168px;">OTKCPM5CT36D</div>
<div class="a t" style="left:690.83px;top:874px;font-size:17.75px;line-height:17.75px;color:#585d67;letter-spacing:0.912px;">Jane Smith</div>
<div class="a t" style="left:865.37px;top:874px;font-size:17.75px;line-height:17.75px;color:#585d67;letter-spacing:0.923px;">24th March 2026</div>
<div class="a t" style="left:1089.5px;top:874px;font-size:17.75px;line-height:17.75px;color:#585d67;letter-spacing:-0.213px;">$199.00</div>
<div class="a t" style="left:1302.0px;top:874px;font-size:17.75px;line-height:17.75px;color:#585d67;letter-spacing:-0.213px;">$189.00</div>
<div class="a t" style="left:1502.59px;top:874px;font-size:17.75px;line-height:17.75px;color:#585d67;">0</div>
<div class="a t" style="left:1661.73px;top:874px;font-size:17.75px;line-height:17.75px;color:#585d67;letter-spacing:0.851px;">Wallet</div>
<div class="a t" style="left:425.09px;top:928px;font-size:17.75px;line-height:17.75px;color:#3b4049;-webkit-text-stroke:0.4px #3b4049;">5</div>
<div class="a t" style="left:467.54px;top:928px;font-size:17.75px;line-height:17.75px;color:#3b4049;-webkit-text-stroke:0.4px #3b4049;letter-spacing:0.616px;">M2H8855GXOX8</div>
<div class="a t" style="left:691.34px;top:928px;font-size:17.75px;line-height:17.75px;color:#585d67;word-spacing:3.5px;transform:scaleX(0.8979);transform-origin:0 0;">AISSA ABDA</div>
<div class="a t" style="left:865.37px;top:928px;font-size:17.75px;line-height:17.75px;color:#585d67;letter-spacing:0.923px;">24th March 2026</div>
<div class="a t" style="left:1089.5px;top:928px;font-size:17.75px;line-height:17.75px;color:#585d67;letter-spacing:-0.288px;">$149.00</div>
<div class="a t" style="left:1302.0px;top:928px;font-size:17.75px;line-height:17.75px;color:#585d67;letter-spacing:-0.213px;">$149.00</div>
<div class="a t" style="left:1502.59px;top:928px;font-size:17.75px;line-height:17.75px;color:#585d67;">0</div>
<div class="a t" style="left:1660.83px;top:928px;font-size:17.75px;line-height:17.75px;color:#585d67;letter-spacing:0.793px;">Stripe</div>
<div class="a t" style="left:374.91px;top:1036px;font-size:16.75px;line-height:16.75px;color:#4053a5;letter-spacing:0.428px;">showing 1 to 5 of 5 entries</div>
<div class="a t" style="left:831.35px;top:1144px;font-size:17.75px;line-height:17.75px;color:#676c76;letter-spacing:0.258px;">Copyright © 2026 MarifaLMS. All rights reserved | Made By UXSEVEN</div>
</body></html>
